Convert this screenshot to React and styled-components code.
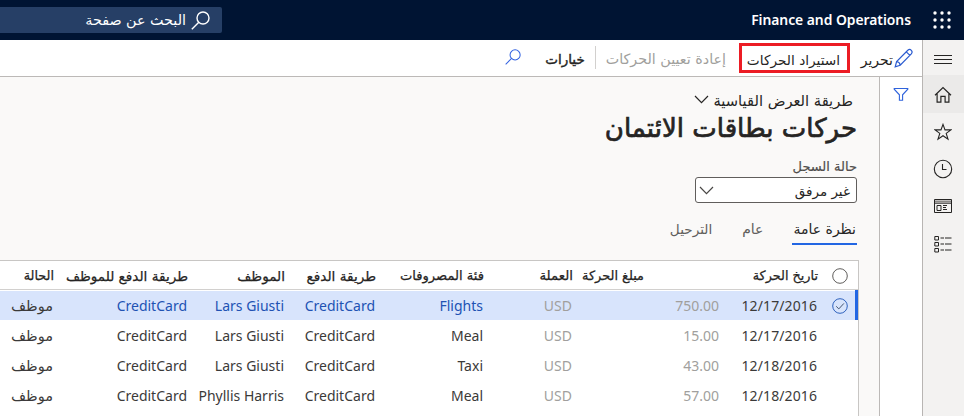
import React from 'react';
import styled, { createGlobalStyle } from 'styled-components';

const GlobalStyle = createGlobalStyle`
  * { box-sizing: border-box; }
  body {
    margin: 0;
    overflow: hidden;
    background: #faf9f8;
    color: #252423;
    font: 14px/20px "Noto Sans", "DejaVu Sans", sans-serif;
  }
`;

const Page = styled.div`
  width: 964px;
  height: 416px;
  direction: rtl;
  display: flex;
  flex-direction: column;
  overflow: hidden;
`;

const Arabic = styled.span`
  display: inline-block;
  flex: none;
  font-family: "DejaVu Sans", sans-serif;
  font-size: ${(p) => p.$size || 14}px;
  color: ${(p) => p.$color || 'inherit'};
  white-space: nowrap;
  line-height: 20px;
  -webkit-text-stroke: ${(p) => p.$stroke || 0}px currentColor;
`;

const Header = styled.header`
  height: 40px;
  flex: none;
  display: flex;
  align-items: center;
  justify-content: space-between;
  background: #001433;
  color: #fff;
`;
const Brand = styled.div`
  display: flex;
  align-items: center;
  gap: 22px;
  padding-right: 13px;
`;
const BrandName = styled.span`
  font: 600 13.9px/20px "Noto Sans", sans-serif;
  letter-spacing: -0.04px;
  direction: ltr;
`;
const SearchBox = styled.div`
  width: 222px;
  height: 26px;
  display: flex;
  align-items: center;
  gap: 5px;
  padding-right: 12px;
  background: #263f66;
  border-radius: 0 2px 2px 0;
`;

const Body = styled.div`
  flex: 1;
  display: flex;
  min-height: 0;
`;
const Rail = styled.nav`
  width: 42px;
  flex: none;
  display: flex;
  flex-direction: column;
  background: #f3f2f1;
  border-left: 1px solid #b8b5b3;
`;
const RailItem = styled.div`
  height: ${(p) => p.$h || 37.3}px;
  flex: none;
  display: flex;
  align-items: center;
  justify-content: center;
  padding: ${(p) => p.$top || 0}px 1px 0 0;
  background: ${(p) => (p.$active ? '#ebeae9' : 'transparent')};
`;

const Workspace = styled.div`
  flex: 1;
  display: flex;
  flex-direction: column;
  min-width: 0;
`;
const Toolbar = styled.div`
  height: 37px;
  flex: none;
  display: flex;
  align-items: center;
  padding-right: 9px;
  background: #fff;
  border-bottom: 1px solid #bcb9b7;
`;
const EditAction = styled.div`
  display: flex;
  align-items: center;
  gap: 1px;
  width: 63px;
`;
const ActionLabel = styled.div`
  padding-top: 3px;
`;
const Highlighted = styled.div`
  width: 111px;
  height: 30px;
  display: flex;
  align-items: center;
  justify-content: center;
  border: 3px solid #ec1c24;
  padding: 3px 2px 0 0;
`;
const ToolbarText = styled.div`
  padding-top: 2px;
  margin-right: ${(p) => p.$before}px;
`;
const Divider = styled.div`
  width: 1px;
  height: 23px;
  margin: 0 10px 2px 0;
  background: #d2d0ce;
`;
const ToolbarSearch = styled.div`
  display: flex;
  margin: 0 24px 3px 0;
`;

const Main = styled.div`
  flex: 1;
  display: flex;
  min-height: 0;
`;
const FilterPane = styled.aside`
  width: 43px;
  flex: none;
  display: flex;
  justify-content: center;
  padding: 10px 0 0 0;
  background: #fff;
  border-left: 1px solid #bcb9b7;
`;
const Content = styled.main`
  flex: 1;
  min-width: 0;
  padding: 12px 22px 0 0;
  display: flex;
  flex-direction: column;
`;
const ViewPicker = styled.div`
  height: 22px;
  display: flex;
  align-items: center;
  gap: 4px;
  padding: 1px 4px 0 0;
  svg { margin-bottom: 2px; }
`;
const Title = styled.h1`
  height: 33px;
  margin: 0;
  display: flex;
  align-items: center;
  font-weight: 400;
`;
const FieldLabel = styled.div`
  height: 20px;
  margin-top: 12px;
`;
const Select = styled.div`
  width: 162px;
  height: 26px;
  margin-top: 1px;
  display: flex;
  align-items: center;
  justify-content: space-between;
  padding: 2px 6px 0 3px;
  background: #fff;
  border: 1px solid #605e5c;
  border-radius: 3px;
  svg { margin-bottom: 1px; }
`;
const Tabs = styled.div`
  height: 31px;
  margin-top: 14px;
  display: flex;
  gap: 28px;
`;
const Tab = styled.div`
  height: 28px;
  padding: 2px 1px 0;
  display: flex;
  color: ${(p) => (p.$active ? '#252423' : '#605e5c')};
  border-bottom: 2px solid ${(p) => (p.$active ? '#2266e3' : 'transparent')};
`;

const Table = styled.div`
  flex: 1;
  margin: 12px -2px 0 0;
  background: #fff;
  border-top: 1px solid #c8c6c4;
  border-right: 1px solid #c8c6c4;
`;
const columns = '40px 98px 147px 89px 108px 91px 97px 134px 54px';
const HeadRow = styled.div`
  display: grid;
  grid-template-columns: ${columns};
  height: 29px;
  padding-top: 1px;
  align-items: center;
  border-bottom: 1px solid #d2d0ce;
`;
const HeadCell = styled.div`
  display: flex;
  justify-content: ${(p) => (p.$end ? 'flex-end' : 'flex-start')};
  padding-left: ${(p) => (p.$end ? 9 : 0)}px;
`;
const DataRow = styled.div`
  display: grid;
  grid-template-columns: ${columns};
  height: 30px;
  padding-top: 1px;
  align-items: center;
  background: ${(p) => (p.$selected ? '#d8e4fc' : '#fff')};
  box-shadow: ${(p) => (p.$selected ? 'inset -3px 0 0 #2266e3, inset 0 1px 0 #fff' : 'none')};
`;
const Cell = styled.div`
  white-space: nowrap;
  padding-right: 1px;
  color: ${(p) => p.$color || '#3b3a39'};
`;
const Ltr = styled.bdi`
  direction: ltr;
  letter-spacing: ${(p) => p.$track || 0}px;
`;
const Mark = styled.div`
  display: flex;
  padding-right: 10px;
`;

const Icon = styled.svg`
  display: block;
  flex: none;
  fill: none;
  stroke: ${(p) => p.$color || '#252423'};
  stroke-width: ${(p) => p.$weight || 1.2};
`;

const Magnifier = ({ size, color, weight }) => (
  <Icon width={size} height={size} viewBox="0 0 19 19" $color={color} $weight={weight}>
    <circle cx="12" cy="7" r="6" />
    <path d="M7.8 11.2 0.8 18.2" />
  </Icon>
);
const Waffle = () => (
  <Icon width="18" height="18" viewBox="0 0 18 18" $color="none">
    {[2, 9, 16].map((y) =>
      [2, 9, 16].map((x) => <circle key={`${x}-${y}`} cx={x} cy={y} r="1.7" fill="#fff" />)
    )}
  </Icon>
);
const Chevron = ({ color }) => (
  <Icon width="15" height="9" viewBox="0 0 15 9" $color={color}>
    <path d="M1 1 7.5 7.6 14 1" />
  </Icon>
);
const Pencil = () => (
  <Icon width="19" height="20" viewBox="0 0 19 20" $color="#2b5bd0">
    <path d="M1.2 18.8 2.6 13.5 13.8 2.3Q15.7.6 17.3 2.3 18.9 4 17.3 5.9L6.2 17.2Z M12.3 3.8 15.9 7.4 M2.6 13.5Q5.7 14 6.2 17.2" />
  </Icon>
);
const Funnel = () => (
  <Icon width="16" height="15" viewBox="0 0 16 15" $color="#2f63dc" $weight={1.1}>
    <path d="M1.2 1.5H14.8V2.2L9.6 7.8V13.3H6.4V7.8L1.2 2.2Z" />
  </Icon>
);
const Check = ({ checked }) => (
  <Icon width="16" height="16" viewBox="0 0 16 16" $color={checked ? '#2f62bd' : '#605e5c'} $weight={1}>
    <circle cx="8" cy="8" r="7.3" />
    {checked && <path d="M4.2 8.3 6.8 10.9 11.9 5.4" stroke="#44546f" />}
  </Icon>
);

const Menu = () => (
  <Icon width="18" height="11" viewBox="0 0 18 11" $weight={1}>
    <path d="M0 1.5H18M0 5.5H18M0 9.5H18" />
  </Icon>
);
const Home = () => (
  <Icon width="18" height="18" viewBox="0 0 18 18">
    <path d="M1 9.3 9 1.6 17 9.3M3.1 7.5V16.2H6.9V10.3H11.1V16.2H14.9V7.5" />
  </Icon>
);
const Star = () => (
  <Icon width="18" height="18" viewBox="0 0 18 18" $weight={1.1}>
    <path d="M9 1.4 11 6.9H16.9L12.2 10.4 14 16.2 9 12.7 4 16.2 5.8 10.4 1.1 6.9H7Z" />
  </Icon>
);
const Clock = () => (
  <Icon width="20" height="20" viewBox="0 0 20 20" $weight={1.1}>
    <circle cx="10" cy="10" r="8.7" />
    <path d="M9.5 5V10.5H13.5" />
  </Icon>
);
const WorkspaceIcon = () => (
  <Icon width="18" height="16" viewBox="0 0 18 16" $weight={1}>
    <path d="M.5 1.5H17.5V14.5H.5ZM.5 5.2H17.5M3 7.5H7V12.5H3ZM9 7.5H13M9 9.5H12M9 11.5H13" />
    <path d="M1 3.5H17" stroke="#8a8886" strokeWidth="2" />
  </Icon>
);
const Modules = () => (
  <Icon width="18" height="18" viewBox="0 0 18 18" $weight={1}>
    {[1.5, 7.5, 13.5].map((y) => (
      <path key={y} d={`M.8 ${y}H4.5V${y + 3.5}H.8ZM6.5 ${y + 1.5}H10M11 ${y + 1.5}H17.5`} />
    ))}
  </Icon>
);

const headings = [
  ['تاريخ الحركة', 12.8],
  ['مبلغ الحركة', 12.9, true],
  ['العملة', 13.4],
  ['فئة المصروفات', 13.1],
  ['طريقة الدفع', 13.6],
  ['الموظف', 13.6],
  ['طريقة الدفع للموظف', 13.6],
  ['الحالة', 12.8],
];

const rows = [
  { date: '12/17/2016', amount: '750.00', category: 'Flights', name: 'Lars Giusti', selected: true },
  { date: '12/17/2016', amount: '15.00', category: 'Meal', name: 'Lars Giusti' },
  { date: '12/18/2016', amount: '43.00', category: 'Taxi', name: 'Lars Giusti' },
  { date: '12/18/2016', amount: '57.00', category: 'Meal', name: 'Phyllis Harris' },
];

export default function App() {
  return (
    <>
      <GlobalStyle />
      <Page>
        <Header>
          <Brand>
            <Waffle />
            <BrandName>Finance and Operations</BrandName>
          </Brand>
          <SearchBox>
            <Magnifier size={19} color="#fff" weight={1.4} />
            <Arabic $size={14.3}>البحث عن صفحة</Arabic>
          </SearchBox>
        </Header>
        <Body>
          <Rail>
            <RailItem $h={35} $top={4}><Menu /></RailItem>
            <RailItem $h={38} $top={1} $active><Home /></RailItem>
            <RailItem><Star /></RailItem>
            <RailItem><Clock /></RailItem>
            <RailItem><WorkspaceIcon /></RailItem>
            <RailItem><Modules /></RailItem>
          </Rail>
          <Workspace>
            <Toolbar>
              <EditAction>
                <Pencil />
                <ActionLabel><Arabic>تحرير</Arabic></ActionLabel>
              </EditAction>
              <Highlighted>
                <Arabic $size={13.7}>استيراد الحركات</Arabic>
              </Highlighted>
              <ToolbarText $before={13}>
                <Arabic $size={14.3} $color="#a19f9d">إعادة تعيين الحركات</Arabic>
              </ToolbarText>
              <Divider />
              <ToolbarText $before={10}>
                <Arabic $size={13.5} $stroke={0.4}>خيارات</Arabic>
              </ToolbarText>
              <ToolbarSearch>
                <Magnifier size={16} color="#2f5fe0" weight={1.2} />
              </ToolbarSearch>
            </Toolbar>
            <Main>
              <FilterPane><Funnel /></FilterPane>
              <Content>
                <ViewPicker>
                  <Arabic $size={14.7}>طريقة العرض القياسية</Arabic>
                  <Chevron />
                </ViewPicker>
                <Title>
                  <Arabic $size={26} $stroke={0.7}>حركات بطاقات الائتمان</Arabic>
                </Title>
                <FieldLabel>
                  <Arabic $size={13} $color="#504e4c" $stroke={0.2}>حالة السجل</Arabic>
                </FieldLabel>
                <Select>
                  <Arabic $size={13.5}>غير مرفق</Arabic>
                  <Chevron color="#484644" />
                </Select>
                <Tabs>
                  <Tab $active><Arabic>نظرة عامة</Arabic></Tab>
                  <Tab><Arabic>عام</Arabic></Tab>
                  <Tab><Arabic $size={13.6}>الترحيل</Arabic></Tab>
                </Tabs>
                <Table>
                  <HeadRow>
                    <Mark><Check /></Mark>
                    {headings.map(([label, size, end]) => (
                      <HeadCell key={label} $end={end}>
                        <Arabic $size={size} $stroke={0.25}>{label}</Arabic>
                      </HeadCell>
                    ))}
                  </HeadRow>
                  {rows.map((row, i) => {
                    const link = row.selected ? '#2152b3' : undefined;
                    return (
                      <DataRow key={i} $selected={row.selected}>
                        <Mark>{row.selected && <Check checked />}</Mark>
                        <Cell><Ltr $track={0.1}>{row.date}</Ltr></Cell>
                        <Cell $color="#a19f9d"><Ltr>{row.amount}</Ltr></Cell>
                        <Cell $color="#a19f9d"><Ltr>USD</Ltr></Cell>
                        <Cell $color={link}><Ltr>{row.category}</Ltr></Cell>
                        <Cell $color={link}><Ltr>CreditCard</Ltr></Cell>
                        <Cell $color={link}><Ltr>{row.name}</Ltr></Cell>
                        <Cell $color={link}><Ltr>CreditCard</Ltr></Cell>
                        <Cell><Arabic $size={14.6}>موظف</Arabic></Cell>
                      </DataRow>
                    );
                  })}
                </Table>
              </Content>
            </Main>
          </Workspace>
        </Body>
      </Page>
    </>
  );
}
